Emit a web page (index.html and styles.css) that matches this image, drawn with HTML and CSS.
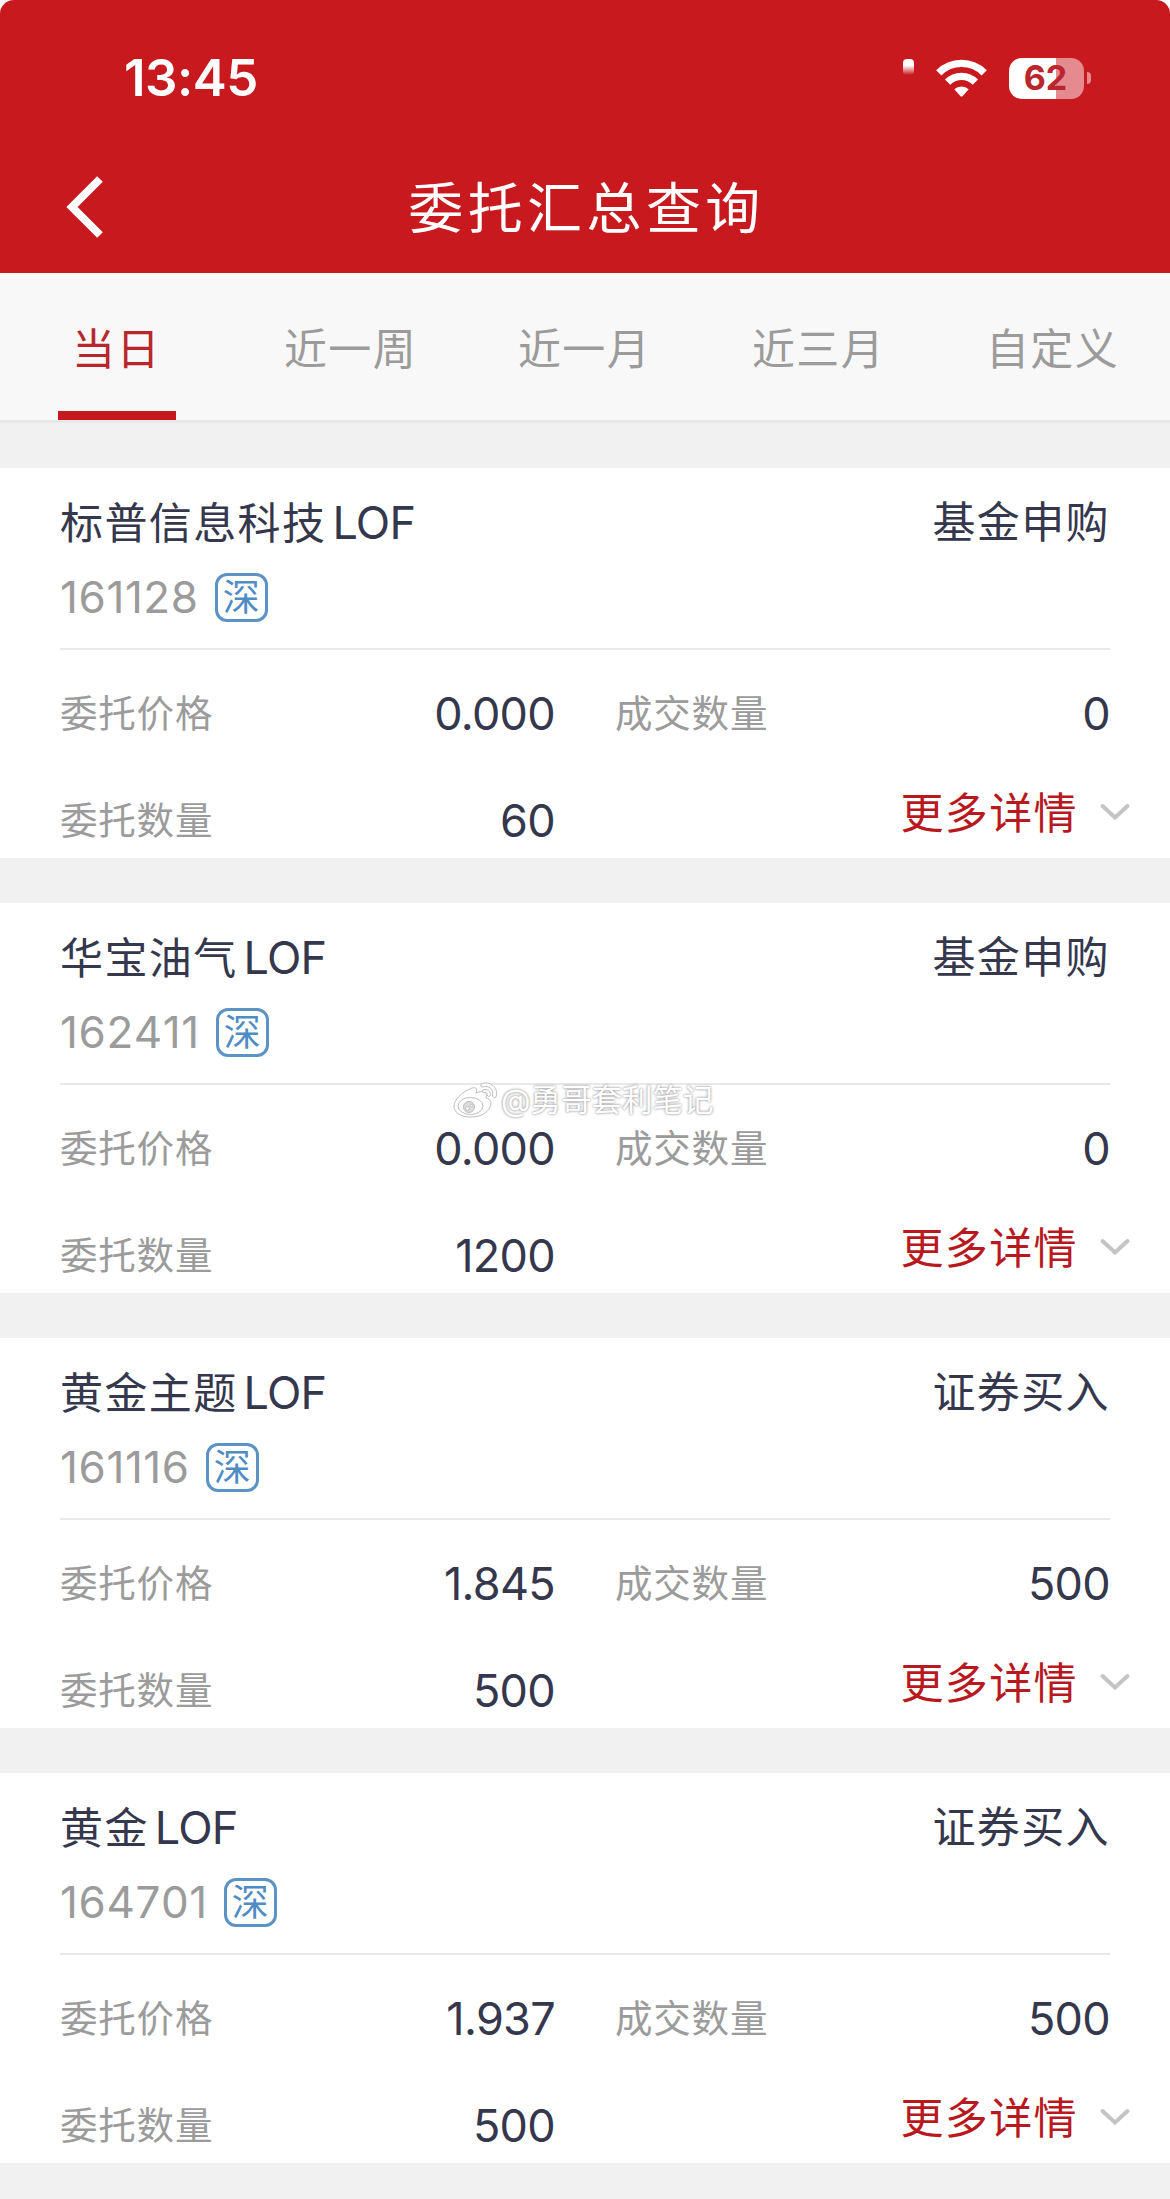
FILE: index.html
```html
<!DOCTYPE html>
<html lang="zh-CN">

<head>
    <meta charset="UTF-8">
    <meta name="viewport" content="width=device-width, initial-scale=1.0">
    <title>委托汇总查询</title>
    <link rel="stylesheet" href="styles.css">
</head>

<body>
    <svg class="sprite" width="0" height="0">
        <symbol id="down" viewBox="0 0 32 18">
            <path d="M3.5 3 L16 14.500 L28.500 3" fill="none" stroke="#c4c4c6" stroke-width="4" stroke-linecap="round" />
        </symbol>
    </svg>

    <header class="header">
        <div class="status-bar">
            <span class="time">13:45</span>
            <div class="status-icons">
                <span class="signal"></span>
                <svg class="wifi" width="51" height="39" viewBox="0 0 51 39">
                    <g fill="none" stroke="#fff" stroke-width="7.4">
                        <path d="M2.8 13.8 A32 32 0 0 1 48.2 13.8" />
                        <path d="M11.6 23.2 A19.6 19.6 0 0 1 39.4 23.2" />
                    </g>
                    <path d="M18.3 30.3 A10.8 10.8 0 0 1 32.7 30.3 L26.7 37 Q25.5 38.2 24.3 37 Z" fill="#fff" />
                </svg>
                <div class="battery">62</div>
                <span class="battery-cap"></span>
            </div>
        </div>
        <div class="nav-bar">
            <svg class="back" width="40" height="64" viewBox="0 0 40 64">
                <path d="M35 4 L7 32 L35 60" fill="none" stroke="#fff" stroke-width="8" />
            </svg>
            <h1 class="title">委托汇总查询</h1>
        </div>
    </header>

    <nav class="tabs">
        <div class="tab active">当日</div>
        <div class="tab">近一周</div>
        <div class="tab">近一月</div>
        <div class="tab">近三月</div>
        <div class="tab">自定义</div>
    </nav>

    <main class="order-list">
        <section class="card">
            <div class="card-head">
                <div class="name">标普信息科技<span class="latin">LOF</span></div>
                <div class="type">基金申购</div>
                <div class="code">161128<span class="market">深</span></div>
            </div>
            <div class="fields">
                <div class="field"><span class="label">委托价格</span><span class="value">0.000</span></div>
                <div class="field"><span class="label">成交数量</span><span class="value">0</span></div>
                <div class="field"><span class="label">委托数量</span><span class="value">60</span></div>
                <div class="more"><span class="more-text">更多详情</span><svg class="arrow" width="32" height="18"><use href="#down" /></svg></div>
            </div>
        </section>

        <section class="card">
            <div class="card-head">
                <div class="name">华宝油气<span class="latin">LOF</span></div>
                <div class="type">基金申购</div>
                <div class="code">162411<span class="market">深</span></div>
            </div>
            <div class="fields">
                <div class="field"><span class="label">委托价格</span><span class="value">0.000</span></div>
                <div class="field"><span class="label">成交数量</span><span class="value">0</span></div>
                <div class="field"><span class="label">委托数量</span><span class="value">1200</span></div>
                <div class="more"><span class="more-text">更多详情</span><svg class="arrow" width="32" height="18"><use href="#down" /></svg></div>
            </div>
            <div class="watermark">
                <svg width="46" height="38" viewBox="0 0 46 38" fill="#fff" stroke="#bdbdbd" stroke-width="1">
                    <path d="M17 8 C22 5 25 7 23 12 C30 9 35 10 33 17 C38 18 39 22 37 26 C34 33 26 36 18 36 C8 36 1 32 1 25 C1 19 9 11 17 8 Z" />
                    <ellipse cx="17.500" cy="25" rx="12.500" ry="8.500" />
                    <circle cx="16" cy="26" r="5.500" fill="#ddd" />
                    <circle cx="14.500" cy="27.500" r="2" />
                    <circle cx="18.500" cy="24.500" r="1" />
                    <path d="M28 3 C37 -1 46 7 43 16 Q41 18 39.500 15 C41 8 36 4 29.500 6 Q27 6 28 3 Z" />
                    <path d="M29.500 9 C34 7 39 11 37 15 Q35 16.500 34 14 C34.500 12 33 11 30.500 12 Q28.500 11 29.500 9 Z" />
                </svg>
                <span class="watermark-text">@勇哥套利笔记</span>
            </div>
        </section>

        <section class="card">
            <div class="card-head">
                <div class="name">黄金主题<span class="latin">LOF</span></div>
                <div class="type">证券买入</div>
                <div class="code">161116<span class="market">深</span></div>
            </div>
            <div class="fields">
                <div class="field"><span class="label">委托价格</span><span class="value">1.845</span></div>
                <div class="field"><span class="label">成交数量</span><span class="value">500</span></div>
                <div class="field"><span class="label">委托数量</span><span class="value">500</span></div>
                <div class="more"><span class="more-text">更多详情</span><svg class="arrow" width="32" height="18"><use href="#down" /></svg></div>
            </div>
        </section>

        <section class="card">
            <div class="card-head">
                <div class="name">黄金<span class="latin">LOF</span></div>
                <div class="type">证券买入</div>
                <div class="code">164701<span class="market">深</span></div>
            </div>
            <div class="fields">
                <div class="field"><span class="label">委托价格</span><span class="value">1.937</span></div>
                <div class="field"><span class="label">成交数量</span><span class="value">500</span></div>
                <div class="field"><span class="label">委托数量</span><span class="value">500</span></div>
                <div class="more"><span class="more-text">更多详情</span><svg class="arrow" width="32" height="18"><use href="#down" /></svg></div>
            </div>
        </section>
    </main>
</body>

</html>
```
FILE: styles.css
```css
* {
    box-sizing: border-box;
}

html {
    background: #fff;
}

body {
    margin: 0;
    height: 2199px;
    overflow: hidden;
    background: #f1f1f1;
    border-radius: 14px 14px 0 0;
    font-family: "Inter", "Noto Sans CJK SC", sans-serif;
    font-weight: 400;
    color: #35374d;
}

.sprite {
    display: block;
}

/* header */
.header {
    height: 273px;
    background: #c8191e;
    color: #fff;
}

.status-bar {
    height: 156px;
    padding: 0 79px 0 124px;
    display: flex;
    align-items: center;
    justify-content: space-between;
}

.time {
    font-size: 51px;
    font-weight: 600;
    line-height: 60px;
    letter-spacing: -0.5px;
}

.status-icons {
    display: flex;
    align-items: center;
}

.signal {
    width: 11px;
    height: 16px;
    margin: 0 22px 22px 0;
    border-radius: 4px;
    background: linear-gradient(#fff 40%, rgba(255, 255, 255, 0));
}

.wifi {
    margin-right: 22px;
}

.battery {
    width: 75px;
    height: 41px;
    padding-right: 2px;
    border-radius: 13px;
    background: linear-gradient(90deg, #fff 63%, #e58a8f 63%);
    color: #b9262b;
    font-size: 34px;
    font-weight: 700;
    line-height: 40px;
    text-align: center;
}

.battery-cap {
    width: 4px;
    height: 12px;
    margin-left: 3px;
    border-radius: 0 6px 6px 0;
    background: #e58a8f;
}

.nav-bar {
    height: 102px;
    padding: 0 65px;
    display: flex;
    align-items: center;
}

.title {
    flex: 1;
    margin: 0 37px 6px 0;
    font-size: 55px;
    font-weight: 400;
    letter-spacing: 4.4px;
    text-align: center;
}

/* tabs */
.tabs {
    height: 150px;
    display: grid;
    grid-template-columns: repeat(5, 1fr);
    background: #f8f8f8;
    border-bottom: 3px solid #e8e8e8;
}

.tab {
    display: flex;
    flex-direction: column;
    align-items: center;
    justify-content: space-between;
    padding-top: 46px;
    font-size: 43px;
    line-height: 60px;
    letter-spacing: 1.4px;
    text-indent: -1px;
    color: #9b9b9b;
}

.active {
    color: #b8272c;
}

.active::after {
    content: "";
    width: 118px;
    height: 9px;
    background: #c4191e;
}

/* cards */
.order-list {
    display: flex;
    flex-direction: column;
    gap: 45px;
    padding-top: 45px;
}

.card {
    position: relative;
    height: 390px;
    padding: 24px 60px 0;
    background: #fff;
}

.card-head {
    display: grid;
    grid-template-columns: 1fr auto;
    row-gap: 15px;
    padding-bottom: 21px;
    border-bottom: 2px solid #e8e8e8;
    line-height: 61px;
}

.name,
.type {
    height: 60px;
    font-size: 43px;
    letter-spacing: 1.4px;
}

.latin {
    margin-left: 6px;
    font-size: 45px;
    letter-spacing: -0.8px;
}

.code {
    display: flex;
    align-items: center;
    height: 60px;
    font-size: 44px;
    letter-spacing: 0.6px;
    font-kerning: none;
    font-feature-settings: "calt" 0;
    color: #9b9b9b;
}

.market {
    width: 53px;
    height: 49px;
    margin-left: 16px;
    border: 3px solid #5b93c4;
    border-radius: 12px;
    font-size: 37px;
    line-height: 43px;
    letter-spacing: 0;
    text-align: center;
    color: #4f8cc4;
}

.fields {
    display: grid;
    grid-template-columns: 1fr 1fr;
    gap: 47px 60px;
    padding-top: 34px;
}

.field {
    display: flex;
    justify-content: space-between;
    height: 60px;
    line-height: 60px;
}

.label {
    font-size: 37.5px;
    letter-spacing: 0.8px;
    color: #9b9b9b;
}

.value {
    font-size: 45px;
    letter-spacing: -0.7px;
}

.more {
    display: flex;
    align-items: center;
    justify-content: flex-end;
    height: 60px;
    margin: -9px -21px 0 0;
    font-size: 43px;
    letter-spacing: 1.4px;
    color: #b8191e;
}

.more-text {
    padding-bottom: 5px;
}

.arrow {
    margin-left: 21px;
}

/* watermark sits over the divider of the second card */
.watermark {
    position: absolute;
    top: 177px;
    left: 453px;
    display: flex;
    align-items: center;
    gap: 2px;
}

.watermark-text {
    font-size: 30.5px;
    line-height: 40px;
    color: #fff;
    text-shadow: 0 0 3px #999, 0 0 2px #bbb;
}
```
